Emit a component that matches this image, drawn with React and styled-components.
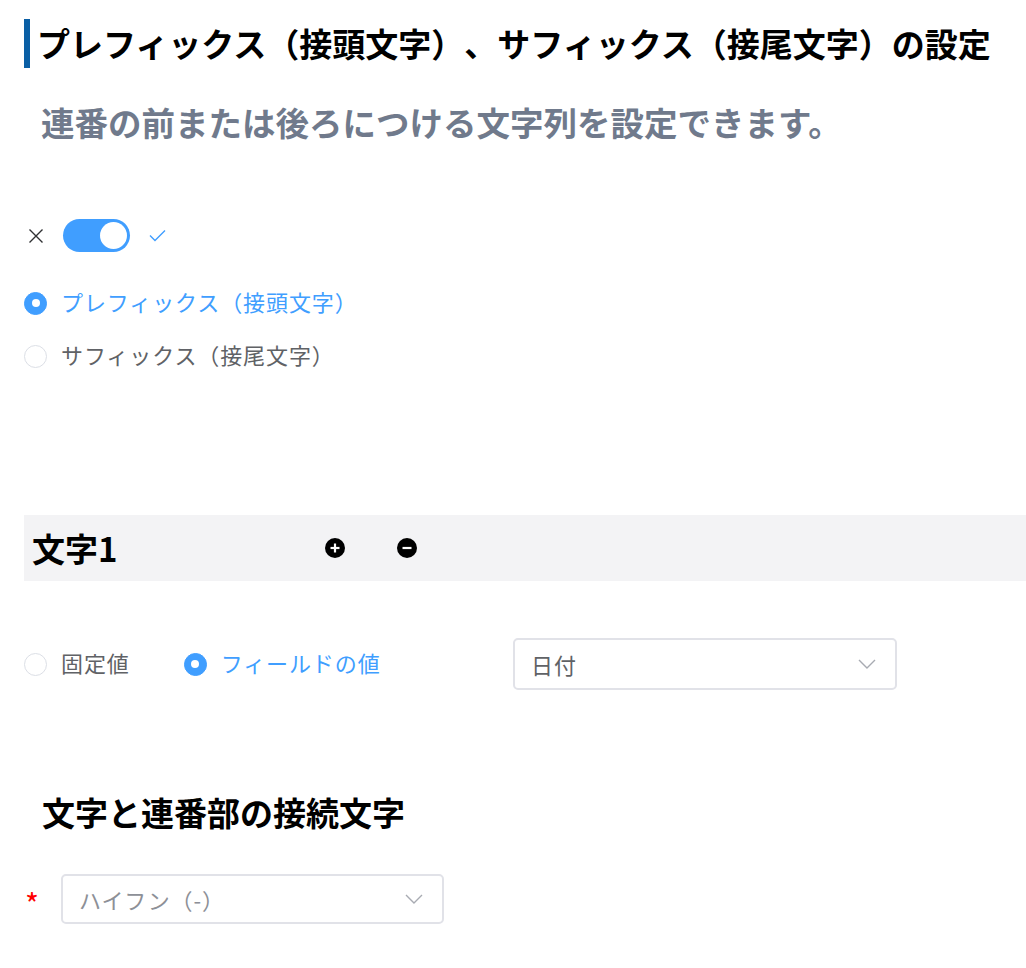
import React, { useState } from "react"
import styled, { createGlobalStyle } from "styled-components"

const GlobalStyle = createGlobalStyle`
    * {
        box-sizing: border-box;
    }

    body {
        margin: 0;
        background: #ffffff;
        font-family: "Noto Sans CJK JP", "Noto Sans", sans-serif;
        text-spacing-trim: space-all;
    }
`

const BLUE = "#409eff"

export default function App() {
    const [enabled, setEnabled] = useState(true)
    const [position, setPosition] = useState("prefix")
    const [source, setSource] = useState("field")

    return (
        <>
            <GlobalStyle />
            <Page>
                <Title>プレフィックス（接頭文字）、サフィックス（接尾文字）の設定</Title>
                <Subtitle>連番の前または後ろにつける文字列を設定できます。</Subtitle>

                <SwitchRow>
                    <CrossIcon />
                    <Toggle $on={enabled} onClick={() => setEnabled(!enabled)}>
                        <Knob $on={enabled} />
                    </Toggle>
                    <CheckIcon />
                </SwitchRow>

                <RadioColumn>
                    <Radio
                        label="プレフィックス（接頭文字）"
                        checked={position === "prefix"}
                        onClick={() => setPosition("prefix")}
                    />
                    <Radio
                        label="サフィックス（接尾文字）"
                        checked={position === "suffix"}
                        onClick={() => setPosition("suffix")}
                    />
                </RadioColumn>

                <Band>
                    <BandTitle>文字1</BandTitle>
                    <BandIcons>
                        <CircleIcon type="plus" />
                        <CircleIcon type="minus" />
                    </BandIcons>
                </Band>

                <SourceRow>
                    <RadioInline>
                        <Radio label="固定値" checked={source === "fixed"} onClick={() => setSource("fixed")} />
                        <Radio label="フィールドの値" checked={source === "field"} onClick={() => setSource("field")} />
                    </RadioInline>
                    <Select $width={384} $height={52}>
                        <SelectText>日付</SelectText>
                        <Chevron />
                    </Select>
                </SourceRow>

                <SectionHeading>文字と連番部の接続文字</SectionHeading>

                <RequiredRow>
                    <Asterisk>*</Asterisk>
                    <Select $width={383} $height={50}>
                        <SelectText $placeholder>ハイフン（-）</SelectText>
                        <Chevron />
                    </Select>
                </RequiredRow>
            </Page>
        </>
    )
}

const Radio = ({ label, checked, onClick }) => (
    <RadioLabel $checked={checked} onClick={onClick}>
        <RadioDot $checked={checked} />
        <RadioText>{label}</RadioText>
    </RadioLabel>
)

const CrossIcon = () => (
    <svg width="16" height="16" viewBox="0 0 16 16">
        <path d="M1.5 1.5 L14.5 14.5 M14.5 1.5 L1.5 14.5" stroke="#303133" strokeWidth="1.4" fill="none" />
    </svg>
)

const CheckIcon = () => (
    <svg width="17" height="13" viewBox="0 0 17 13">
        <path d="M1 6.5 L6 11.5 L16 1.5" stroke={BLUE} strokeWidth="1.4" fill="none" />
    </svg>
)

const CircleIcon = ({ type }) => (
    <svg width="20" height="20" viewBox="0 0 20 20">
        <circle cx="10" cy="10" r="10" fill="#000" />
        <path d="M5.5 10 H14.5" stroke="#fff" strokeWidth="2.2" />
        {type === "plus" && <path d="M10 5.5 V14.5" stroke="#fff" strokeWidth="2.2" />}
    </svg>
)

const Chevron = () => (
    <svg width="18" height="10" viewBox="0 0 18 10">
        <path d="M1 1 L9 9 L17 1" stroke="#a8abb2" strokeWidth="1.4" fill="none" />
    </svg>
)

const Page = styled.div`
    padding: 19px 0 40px 24px;
`

const Title = styled.h1`
    margin: 0;
    height: 49px;
    padding-left: 7px;
    border-left: 6px solid #0a5fa5;
    font-size: 33px;
    line-height: 49px;
    font-weight: 700;
    color: #000;
    white-space: nowrap;
`

const Subtitle = styled.p`
    margin: 32px 0 0;
    padding-left: 17px;
    font-size: 33.5px;
    line-height: 44px;
    font-weight: 700;
    color: #707a8c;
`

const SwitchRow = styled.div`
    display: flex;
    align-items: center;
    gap: 19px;
    margin-top: 75px;
    height: 33px;
    padding-left: 4px;
`

const Toggle = styled.div`
    position: relative;
    width: 67px;
    height: 33px;
    border-radius: 17px;
    background: ${(p) => (p.$on ? BLUE : "#dcdfe6")};
    cursor: pointer;
`

const Knob = styled.div`
    position: absolute;
    top: 3px;
    left: ${(p) => (p.$on ? "37px" : "3px")};
    width: 27px;
    height: 27px;
    border-radius: 50%;
    background: #fff;
`

const RadioColumn = styled.div`
    display: flex;
    flex-direction: column;
    gap: 21px;
    margin-top: 35px;
`

const RadioLabel = styled.label`
    display: flex;
    align-items: center;
    gap: 14px;
    height: 32px;
    font-size: 22px;
    line-height: 30px;
    letter-spacing: 0.9px;
    color: ${(p) => (p.$checked ? BLUE : "#606266")};
    cursor: pointer;
    white-space: nowrap;
`

const RadioText = styled.span`
    margin-top: -4px;
`

const RadioDot = styled.span`
    position: relative;
    flex: none;
    width: 23px;
    height: 23px;
    border-radius: 50%;
    border: 1.5px solid ${(p) => (p.$checked ? BLUE : "#dcdfe6")};
    background: ${(p) => (p.$checked ? BLUE : "#fff")};

    &::after {
        content: "";
        display: ${(p) => (p.$checked ? "block" : "none")};
        position: absolute;
        top: 50%;
        left: 50%;
        width: 8px;
        height: 8px;
        margin: -4px 0 0 -4px;
        border-radius: 50%;
        background: #fff;
    }
`

const Band = styled.div`
    display: flex;
    align-items: center;
    height: 66px;
    margin-top: 143px;
    padding-left: 8px;
    background: #f3f3f5;
`

const BandTitle = styled.h2`
    margin: 0;
    width: 293px;
    font-size: 33px;
    line-height: 44px;
    font-weight: 700;
    color: #000;
`

const BandIcons = styled.div`
    display: flex;
    align-items: center;
    gap: 52px;
`

const SourceRow = styled.div`
    display: flex;
    align-items: center;
    margin-top: 57px;
`

const RadioInline = styled.div`
    display: flex;
    align-items: center;
    gap: 54px;
    width: 489px;
`

const Select = styled.div`
    display: flex;
    align-items: center;
    justify-content: space-between;
    width: ${(p) => p.$width}px;
    height: ${(p) => p.$height}px;
    padding: 0 19px 0 16px;
    border: 2px solid #e1e2e8;
    border-radius: 5px;
    background: #fff;
`

const SelectText = styled.span`
    font-size: 22px;
    line-height: 30px;
    letter-spacing: 0.9px;
    color: ${(p) => (p.$placeholder ? "#8d9097" : "#606266")};
`

const SectionHeading = styled.h2`
    margin: 100px 0 0;
    padding-left: 18px;
    font-size: 33px;
    line-height: 44px;
    font-weight: 700;
    color: #000;
`

const RequiredRow = styled.div`
    display: flex;
    align-items: center;
    margin-top: 40px;
`

const Asterisk = styled.span`
    width: 37px;
    padding-left: 1px;
    font-size: 30px;
    line-height: 30px;
    padding-top: 8px;
    color: #ff0000;
`
